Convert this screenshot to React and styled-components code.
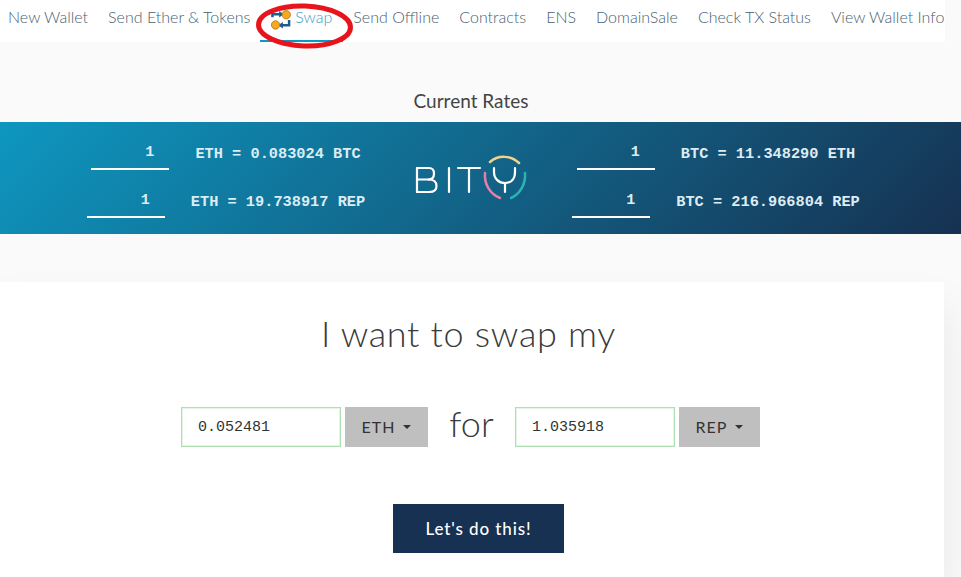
import React from "react";
import styled, { createGlobalStyle } from "styled-components";

const Global = createGlobalStyle`
  html, body { margin: 0; padding: 0; }
  body {
    position: relative;
    width: 961px;
    height: 577px;
    overflow: hidden;
    background: #fafafa;
    font-family: Lato, "Open Sans", sans-serif;
    color: #333;
  }
`;

const Nav = styled.nav`
  display: flex;
  height: 42px;
  width: 945px;
  overflow: hidden;
  background: #fff;
  box-sizing: border-box;
`;

const NavItem = styled.a`
  display: flex;
  align-items: center;
  gap: 4px;
  height: 100%;
  padding: 0 ${(p) => (p.$active ? 11 : 10)}px 10px 10px;
  box-sizing: border-box;
  flex: none;
  font-size: 16px;
  font-weight: 300;
  color: ${(p) => (p.$active ? "#3f9cc4" : "#4a5f70")};
  white-space: nowrap;
  &:first-child {
    margin-left: -2px;
  }
  ${(p) => p.$active && "box-shadow: inset 0 -2px 0 #0e97c0;"}
`;

const IconSlot = styled.span`
  display: flex;
  margin: 8px 0 0 1px;
`;

const Title = styled.h2`
  margin: 48px 0 0;
  height: 32px;
  line-height: 22px;
  text-align: center;
  padding-right: 19px;
  font-size: 19px;
  font-weight: 400;
  color: #444;
`;

const Banner = styled.section`
  display: grid;
  grid-template-columns: 1fr 120px 1fr;
  align-items: center;
  height: 112px;
  box-sizing: border-box;
  padding: 0 60px 8px 41px;
  background: linear-gradient(135deg, #0e97c0 0%, #163151 100%);
`;

const RateColumn = styled.div`
  display: flex;
  flex-direction: column;
  gap: 8px;
`;

const RateRow = styled.div`
  display: flex;
  justify-content: center;
  align-items: center;
  gap: 26px;
  height: 40px;
`;

const RateInput = styled.div`
  width: 78px;
  height: 40px;
  box-sizing: border-box;
  border-bottom: 2px solid #fff;
  padding: 12px 15px 0 0;
  text-align: right;
  font-family: "Liberation Mono", monospace;
  font-size: 15px;
  font-weight: 700;
  line-height: 22px;
  color: #dcecf3;
`;

const RateText = styled.span`
  font-family: "Liberation Mono", monospace;
  font-size: 15.3px;
  font-weight: 700;
  padding-top: 8px;
  color: #dcecf3;
  white-space: pre;
`;

const LogoWrap = styled.div`
  display: flex;
  justify-content: center;
  margin-top: 8px;
`;

const Card = styled.main`
  width: 944px;
  height: 295px;
  margin-top: 48px;
  padding-top: 28px;
  box-sizing: border-box;
  background: #fff;
  box-shadow: 0 24px 40px rgba(0, 0, 0, 0.08);
`;

const Heading = styled.h1`
  margin: 0;
  height: 46px;
  line-height: 46px;
  text-align: center;
  padding-right: 7px;
  font-size: 36px;
  font-weight: 300;
  letter-spacing: 0.7px;
  color: #3a3a3a;
`;

const SwapRow = styled.div`
  display: flex;
  align-items: center;
  margin: 51px 0 0 181px;
  height: 40px;
`;

const AmountInput = styled.div`
  width: 160px;
  height: 40px;
  box-sizing: border-box;
  border: 1px solid #aee0b1;
  box-shadow: inset 0 0 0 1px #e3f5e4;
  padding: 0 16px;
  line-height: 40px;
  background: #fff;
  font-family: "Liberation Mono", monospace;
  font-size: 15px;
  color: #333;
`;

const CoinButton = styled.div`
  display: flex;
  align-items: center;
  justify-content: center;
  gap: 8px;
  width: ${(p) => p.$width}px;
  height: 40px;
  padding-bottom: 2px;
  box-sizing: border-box;
  margin-left: 4px;
  background: #bfbfbf;
  font-size: 16px;
  letter-spacing: 1px;
  color: #333;
`;

const Caret = styled.span`
  width: 0;
  height: 0;
  margin-top: 2px;
  border-left: 4px solid transparent;
  border-right: 4px solid transparent;
  border-top: 4px solid #333;
`;

const ForLabel = styled.span`
  width: 87px;
  padding-bottom: 8px;
  text-align: center;
  font-size: 36px;
  font-weight: 300;
  color: #3a3a3a;
`;

const ActionRow = styled.div`
  display: flex;
  margin: 57px 0 0 393px;
`;

const Action = styled.button`
  width: 171px;
  height: 49px;
  border: 0;
  background: #163151;
  color: #fff;
  font-family: Lato, sans-serif;
  font-size: 17px;
  font-weight: 500;
  letter-spacing: 0.9px;
`;

// the red hand-drawn ring lying over the nav in the picture
const Annotation = styled.svg`
  position: absolute;
  left: 250px;
  top: 0;
  pointer-events: none;
`;

const SwapIcon = () => (
  <svg width="20" height="20" viewBox="0 0 21 20">
    <path d="M1.500 7V4H11" fill="none" stroke="#1a5f8c" strokeWidth="2.600" />
    <path d="M8.500 0.500l5 3.500-5 3.500z" fill="#1a5f8c" />
    <circle cx="16" cy="4.500" r="4.400" fill="#f7a91e" stroke="#a8700f" strokeWidth="0.8" />
    <path d="M19 10V15.500H10" fill="none" stroke="#1a5f8c" strokeWidth="2.600" />
    <path d="M12.500 12l-5 3.500 5 3.500z" fill="#1a5f8c" />
    <circle cx="4.800" cy="15.200" r="4.400" fill="#f7a91e" stroke="#a8700f" strokeWidth="0.8" />
  </svg>
);

const BityLogo = () => (
  <svg width="116" height="46" viewBox="0 0 116 46" fill="none">
    <g stroke="#fff" strokeWidth="2.200" strokeLinecap="round" strokeLinejoin="round">
      <path d="M4 13V37" />
      <path d="M4 13H16C19.500 13 21 15 21 18.500C21 22 19 24.500 15.500 24.500H4" />
      <path d="M15.500 24.500C20.500 24.500 23.500 27 23.500 31C23.500 35 20.500 37 16.500 37H4" />
      <path d="M36 13V37" />
      <path d="M45 13H67M56 13V37" />
      <path d="M81 13V17C81 24 86 28 92 28C98 28 102 24 102 17V13" />
      <path d="M92 28V37" />
    </g>
    <path d="M72 18C71 29 77 39 87 43" stroke="#e87fa9" strokeWidth="2.500" strokeLinecap="round" />
    <path d="M77 7C85 0 98 0 106 8" stroke="#f2d38b" strokeWidth="2.500" strokeLinecap="round" />
    <path d="M112 18C113 29 107 39 98 43" stroke="#2bb3b5" strokeWidth="2.500" strokeLinecap="round" />
  </svg>
);

const navItems = [
  "New Wallet",
  "Send Ether & Tokens",
  "Swap",
  "Send Offline",
  "Contracts",
  "ENS",
  "DomainSale",
  "Check TX Status",
  "View Wallet Info",
];

const rates = [
  ["ETH = 0.083024 BTC", "ETH = 19.738917 REP"],
  ["BTC = 11.348290 ETH", "BTC = 216.966804 REP"],
];

const Rates = ({ rows }) => (
  <RateColumn>
    {rows.map((text) => (
      <RateRow key={text}>
        <RateInput>1</RateInput>
        <RateText>{text}</RateText>
      </RateRow>
    ))}
  </RateColumn>
);

export default function App() {
  return (
    <>
      <Global />
      <Nav>
        {navItems.map((name) => (
          <NavItem key={name} $active={name === "Swap"}>
            {name === "Swap" && (
              <IconSlot>
                <SwapIcon />
              </IconSlot>
            )}
            {name}
          </NavItem>
        ))}
      </Nav>
      <Title>Current Rates</Title>
      <Banner>
        <Rates rows={rates[0]} />
        <LogoWrap>
          <BityLogo />
        </LogoWrap>
        <Rates rows={rates[1]} />
      </Banner>
      <Card>
        <Heading>I want to swap my</Heading>
        <SwapRow>
          <AmountInput>0.052481</AmountInput>
          <CoinButton $width={83}>
            ETH <Caret />
          </CoinButton>
          <ForLabel>for</ForLabel>
          <AmountInput>1.035918</AmountInput>
          <CoinButton $width={81}>
            REP <Caret />
          </CoinButton>
        </SwapRow>
        <ActionRow>
          <Action>Let's do this!</Action>
        </ActionRow>
      </Card>
      <Annotation width="112" height="54" viewBox="0 0 112 54" fill="none">
        <ellipse cx="54.500" cy="26" rx="46" ry="20" stroke="#e8141c" strokeWidth="5" transform="rotate(2 54.500 26)" />
      </Annotation>
    </>
  );
}
